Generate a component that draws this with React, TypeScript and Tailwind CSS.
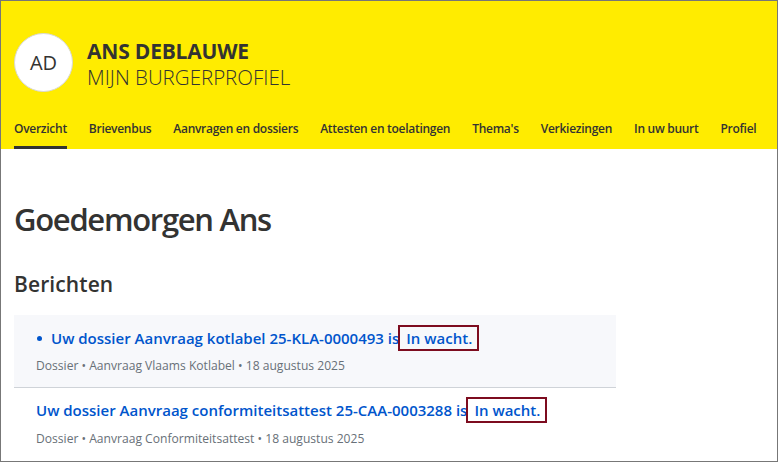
import React from "react";

const navItems = [
  "Overzicht",
  "Brievenbus",
  "Aanvragen en dossiers",
  "Attesten en toelatingen",
  "Thema's",
  "Verkiezingen",
  "In uw buurt",
  "Profiel",
];

export default function App() {
  return (
    <div
      className="w-[778px] h-[462px] border border-[#777777] bg-white overflow-hidden text-[#333332]"
      style={{ fontFamily: "'Open Sans', 'Noto Sans', sans-serif" }}
    >
      <header className="bg-[#ffec00] h-[148px]">
        <div className="flex items-center gap-[14px] pl-[13px] pt-[32px]">
          <div className="w-[59px] h-[59px] rounded-full bg-white border border-[#d8d8d8] flex items-center justify-center text-[20px] text-[#333332]">
            AD
          </div>
          <div className="flex flex-col">
            <div className="text-[21px] leading-[28px] font-bold tracking-[-0.2px]">ANS DEBLAUWE</div>
            <div className="text-[20.5px] leading-[24px] font-light">MIJN BURGERPROFIEL</div>
          </div>
        </div>
        <nav className="flex gap-[22px] pl-[13px] mt-[27px] whitespace-nowrap">
          {navItems.map((item, i) => (
            <div
              key={item}
              className={
                "text-[12px] leading-[20px] font-semibold tracking-[-0.28px] pb-[7px] border-b-[3px] " +
                (i === 0 ? "border-[#333332]" : "border-transparent")
              }
            >
              {item}
            </div>
          ))}
        </nav>
      </header>
      <main className="pl-[13px]">
        <h1 className="text-[31px] leading-[40px] font-semibold tracking-[-1.3px] mt-[50px]">Goedemorgen Ans</h1>
        <h2 className="text-[21px] leading-[28px] font-semibold tracking-[0.1px] mt-[31px]">Berichten</h2>
        <ul className="w-[602px] mt-[17px]">
          <li className="bg-[#f7f8fb] border-b border-[#cfd3d8] pt-[10px] pb-[13px] pl-[22px]">
            <div className="flex items-center h-[26px] text-[15px] font-semibold text-[#0055cc] whitespace-nowrap">
              <span className="w-[5px] h-[5px] rounded-full bg-[#0055cc] ml-[1px] mr-[9px]"></span>
              <span>Uw dossier Aanvraag kotlabel 25-KLA-0000493 is</span>
              <span className="border-2 border-[#7d0c1f] h-[26px] -ml-[1px] pl-[6px] pr-[5px] leading-[22px]">In wacht.</span>
            </div>
            <div className="text-[12.1px] leading-[16px] text-[#687078] mt-[7px]">
              Dossier • Aanvraag Vlaams Kotlabel • 18 augustus 2025
            </div>
          </li>
          <li className="pt-[9px] pb-[11px] pl-[22px]">
            <div className="flex items-center h-[26px] text-[15px] font-semibold text-[#0055cc] whitespace-nowrap">
              <span>Uw dossier Aanvraag conformiteitsattest 25-CAA-0003288 is</span>
              <span className="border-2 border-[#7d0c1f] h-[26px] -ml-[1px] pl-[6px] pr-[5px] leading-[22px]">In wacht.</span>
            </div>
            <div className="text-[12.1px] leading-[16px] text-[#687078] mt-[8px]">
              Dossier • Aanvraag Conformiteitsattest • 18 augustus 2025
            </div>
          </li>
        </ul>
      </main>
    </div>
  );
}
